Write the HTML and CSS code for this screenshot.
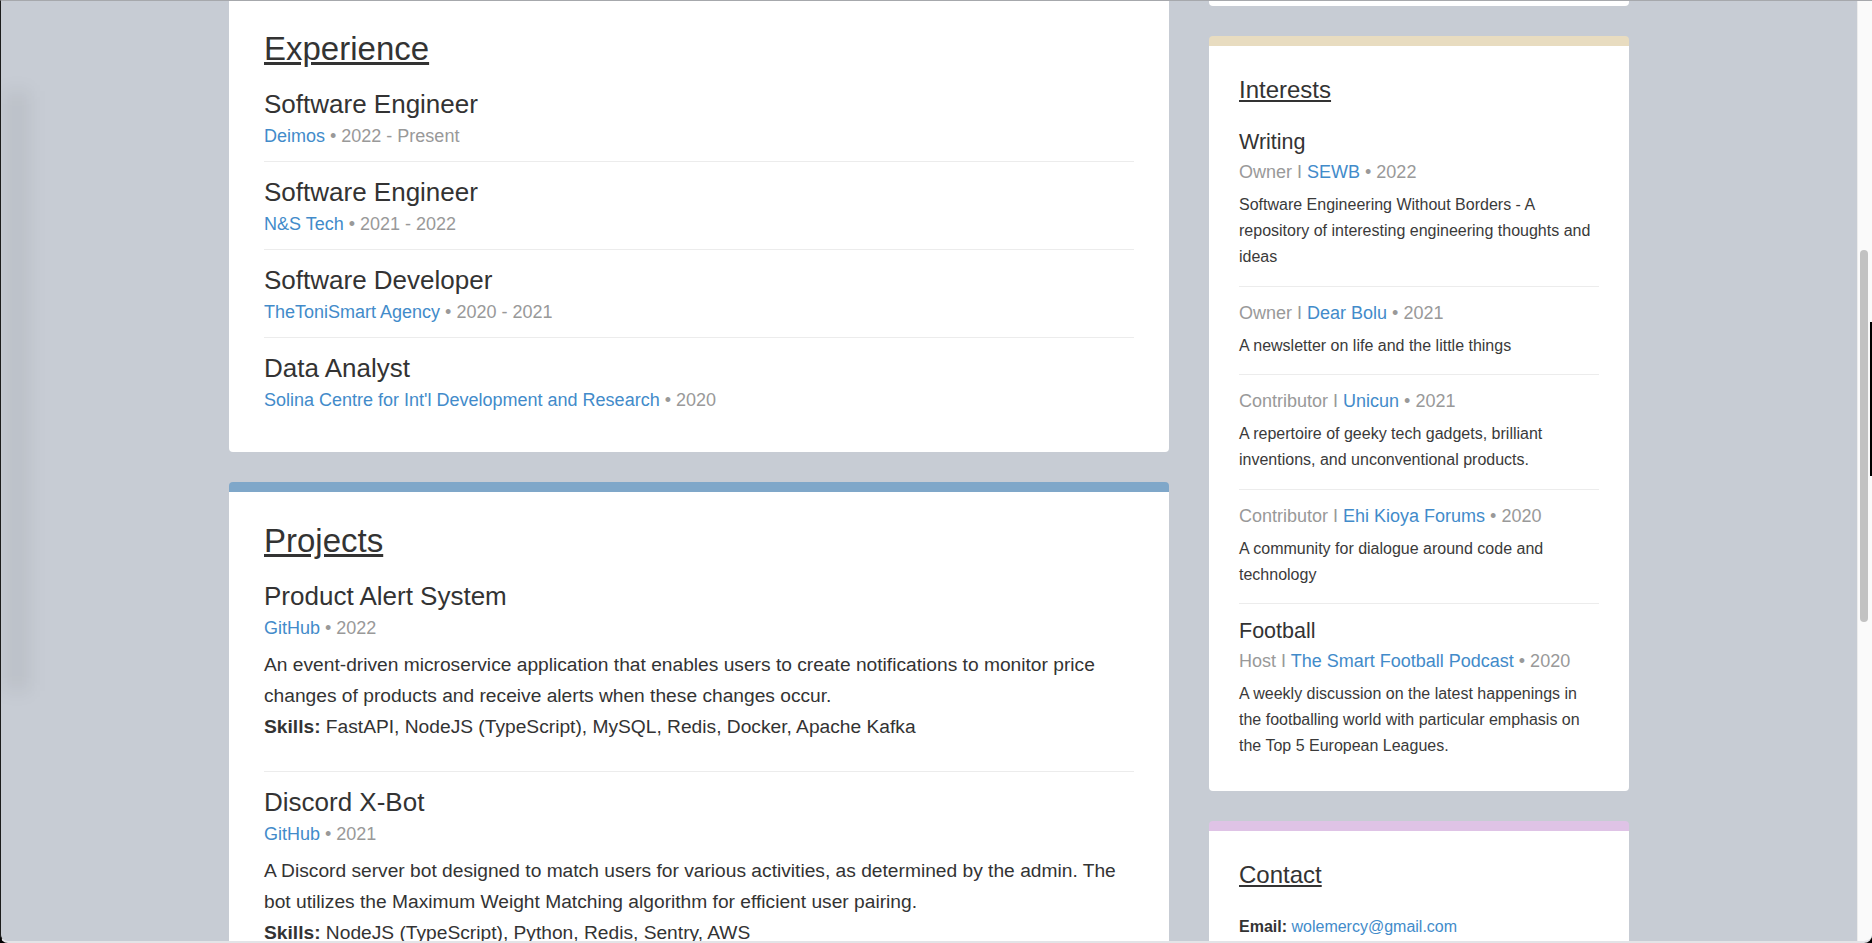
FILE: index.html
```html
<!DOCTYPE html>
<html lang="en">
<head>
<meta charset="utf-8">
<title>Resume</title>
<link rel="stylesheet" href="styles.css">
</head>
<body>
<div class="window">
  <div class="viewport">
    <div class="page">
      <main class="col-main">
        <section class="card card-exp">
          <h2 class="section-title">Experience</h2>
          <div class="entry">
            <h3 class="entry-title">Software Engineer</h3>
            <p class="meta"><a href="#">Deimos</a> • 2022 - Present</p>
          </div>
          <div class="entry">
            <h3 class="entry-title">Software Engineer</h3>
            <p class="meta"><a href="#">N&amp;S Tech</a> • 2021 - 2022</p>
          </div>
          <div class="entry">
            <h3 class="entry-title">Software Developer</h3>
            <p class="meta"><a href="#">TheToniSmart Agency</a> • 2020 - 2021</p>
          </div>
          <div class="entry">
            <h3 class="entry-title">Data Analyst</h3>
            <p class="meta"><a href="#">Solina Centre for Int'l Development and Research</a> • 2020</p>
          </div>
        </section>

        <section class="card card-blue">
          <h2 class="section-title">Projects</h2>
          <div class="entry project">
            <h3 class="entry-title">Product Alert System</h3>
            <p class="meta"><a href="#">GitHub</a> • 2022</p>
            <p class="desc">An event-driven microservice application that enables users to create notifications to monitor price changes of products and receive alerts when these changes occur.</p>
            <p class="skills"><strong>Skills:</strong> FastAPI, NodeJS (TypeScript), MySQL, Redis, Docker, Apache Kafka</p>
          </div>
          <div class="entry project">
            <h3 class="entry-title">Discord X-Bot</h3>
            <p class="meta"><a href="#">GitHub</a> • 2021</p>
            <p class="desc">A Discord server bot designed to match users for various activities, as determined by the admin. The bot utilizes the Maximum Weight Matching algorithm for efficient user pairing.</p>
            <p class="skills"><strong>Skills:</strong> NodeJS (TypeScript), Python, Redis, Sentry, AWS</p>
          </div>
        </section>
      </main>

      <aside class="col-side">
        <div class="card card-stub"></div>

        <section class="card side-card card-tan">
          <h2 class="side-title">Interests</h2>
          <div class="item">
            <h3 class="item-title">Writing</h3>
            <p class="item-meta">Owner I <a href="#">SEWB</a> • 2022</p>
            <p class="item-desc">Software Engineering Without Borders - A repository of interesting engineering thoughts and ideas</p>
          </div>
          <div class="item">
            <p class="item-meta">Owner I <a href="#">Dear Bolu</a> • 2021</p>
            <p class="item-desc">A newsletter on life and the little things</p>
          </div>
          <div class="item">
            <p class="item-meta">Contributor I <a href="#">Unicun</a> • 2021</p>
            <p class="item-desc">A repertoire of geeky tech gadgets, brilliant inventions, and unconventional products.</p>
          </div>
          <div class="item">
            <p class="item-meta">Contributor I <a href="#">Ehi Kioya Forums</a> • 2020</p>
            <p class="item-desc">A community for dialogue around code and technology</p>
          </div>
          <div class="item">
            <h3 class="item-title">Football</h3>
            <p class="item-meta">Host I <a href="#">The Smart Football Podcast</a> • 2020</p>
            <p class="item-desc">A weekly discussion on the latest happenings in the footballing world with particular emphasis on the Top 5 European Leagues.</p>
          </div>
        </section>

        <section class="card side-card card-purple">
          <h2 class="side-title">Contact</h2>
          <div class="item">
            <p class="contact-line"><strong>Email:</strong> <a href="#">wolemercy@gmail.com</a></p>
          </div>
        </section>
      </aside>
    </div>
  </div>
  <div class="scrollbar"><div class="thumb"></div></div>
  <div class="edge-shadow"></div>
  <div class="edge-right"></div>
</div>
</body>
</html>
```

FILE: styles.css
```css
* { box-sizing: border-box; }

html, body {
  margin: 0;
  padding: 0;
  background: #000;
}

body {
  font-family: "Liberation Sans", Arial, Helvetica, sans-serif;
  color: #333;
}

a {
  color: #428bca;
  text-decoration: none;
}

.window {
  position: relative;
  width: 1872px;
  height: 943px;
  display: flex;
  overflow: hidden;
  background: #c7ccd4;
  border-top: 1px solid #a6a8ac;
  border-left: 1px solid #1c1c1c;
  border-bottom: 2px solid #e3e4e7;
  border-radius: 0 0 8px 8px;
}

.viewport {
  flex: 1;
  display: flex;
  justify-content: center;
  align-items: flex-start;
  overflow: hidden;
}

.page {
  width: 1400px;
  display: flex;
  gap: 40px;
  align-items: flex-start;
}

.col-main {
  width: 940px;
  display: flex;
  flex-direction: column;
  gap: 30px;
}

.col-side {
  width: 420px;
  display: flex;
  flex-direction: column;
  gap: 30px;
}

.card {
  background: #fff;
  border-radius: 4px;
}

/* main column */
.card-exp {
  border-radius: 0 0 4px 4px;
  padding: 28px 35px 27px;
}

.card-blue {
  border-top: 10px solid #7fa7c9;
  padding: 29px 35px 30px;
}

.section-title {
  margin: 0 0 5px;
  font-size: 33px;
  line-height: 40px;
  font-weight: 400;
  color: #333;
  text-decoration: underline;
}

.entry {
  padding: 14px 0 11px;
  border-bottom: 1px solid #ececec;
}

.entry:last-child {
  border-bottom: none;
}

.entry-title {
  margin: 0;
  font-size: 26px;
  line-height: 32px;
  font-weight: 400;
  color: #333;
}

.meta {
  margin: 3px 0 0;
  font-size: 18px;
  line-height: 27px;
  color: #999;
}

.desc,
.skills {
  margin: 0;
  font-size: 19.2px;
  line-height: 31.2px;
  color: #333;
}

.desc {
  margin-top: 7px;
}

.skills {
  margin-bottom: 17px;
}

.skills strong {
  font-weight: 700;
}

/* side column */
.card-stub {
  height: 5px;
  border-radius: 0 0 4px 4px;
}

.side-card {
  padding: 29px 30px 32px;
}

.card-tan {
  border-top: 10px solid #e8dcc0;
}

.card-purple {
  border-top: 10px solid #dfc3e6;
}

.side-title {
  margin: 0 0 10px;
  font-size: 24px;
  line-height: 30px;
  font-weight: 400;
  color: #333;
  text-decoration: underline;
}

.item {
  padding: 14px 0 15.5px;
  border-bottom: 1px solid #ececec;
}

.item:last-child {
  border-bottom: none;
  padding-bottom: 0;
}

.item-title {
  margin: 0 0 4px;
  font-size: 21.5px;
  line-height: 27px;
  font-weight: 400;
  color: #333;
}

.item-meta {
  margin: 0;
  font-size: 18px;
  line-height: 24px;
  color: #999;
}

.item-desc {
  margin: 8px 0 0;
  font-size: 16px;
  line-height: 26px;
  color: #3a3a3a;
}

.contact-line {
  margin: 0;
  font-size: 16px;
  line-height: 26px;
  color: #333;
}

/* browser chrome bits */
.scrollbar {
  position: relative;
  flex: none;
  width: 15px;
  background: #fafafa;
  border-left: 1px solid #ececec;
}

.thumb {
  position: absolute;
  left: 2px;
  top: 249px;
  width: 8px;
  height: 372px;
  border-radius: 4px;
  background: #c2c2c2;
}

.edge-shadow {
  position: absolute;
  left: 4px;
  top: 90px;
  width: 24px;
  height: 600px;
  background: rgba(0, 0, 0, 0.06);
  filter: blur(9px);
  pointer-events: none;
}

.edge-right {
  position: absolute;
  right: 0;
  top: 321px;
  width: 2px;
  height: 154px;
  background: #000;
}
```
